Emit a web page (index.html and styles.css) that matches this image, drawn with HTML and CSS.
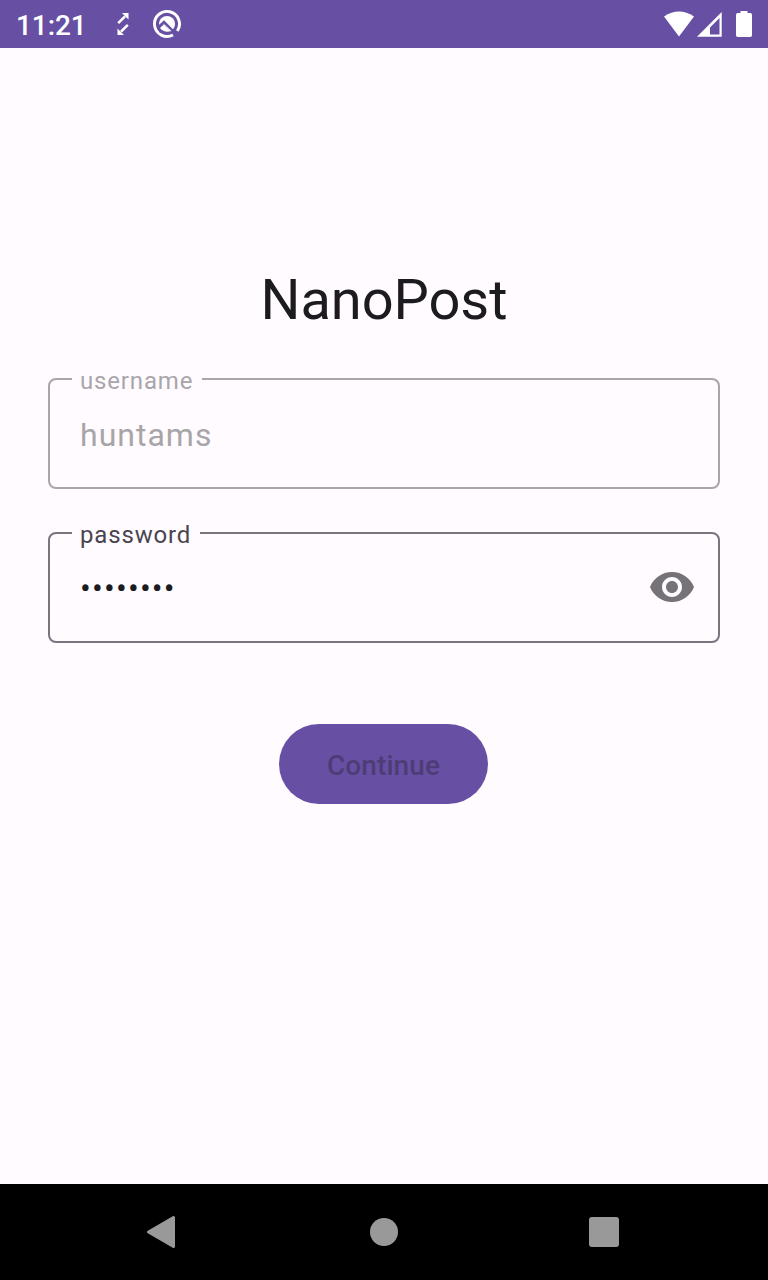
FILE: index.html
```html
<!DOCTYPE html>
<html lang="en">
<head>
<meta charset="utf-8">
<title>NanoPost</title>
<link rel="stylesheet" href="styles.css">
</head>
<body>
<div class="screen">
  <header class="status">
    <span class="clock">11:21</span>
    <svg class="sync" width="12" height="22" viewBox="0 0 12 22" fill="none" stroke="#fff" stroke-width="2.600"><path d="M1.200 10.200 8 3.400M10.800 11.800 4 18.600"/><path d="M5 0H11.500V6.500ZM.5 15.500V22H7Z" fill="#fff" stroke="none"/></svg>
    <svg class="q" width="30" height="30" viewBox="0 0 30 30" fill="none"><path d="M21 25.900A12.500 12.500 0 1 1 25.300 22" stroke="#fff" stroke-width="2.900"/><circle cx="15" cy="15" r="8" fill="#fff"/><path d="M6 18.500 12 13 23 24" stroke="#6750a4" stroke-width="2.400"/><path d="M5 18.500 12 15 20 24H8Z" fill="#6750a4"/><path d="M8 19 11.800 15.600 18.800 22.300Q12 24 8 19Z" fill="#fff"/></svg>
    <svg class="signals" width="88" height="28" viewBox="0 0 88 28" fill="#fff"><path d="M0 6.500Q15-3.500 30 6.500L15 26.500Z"/><path fill-rule="evenodd" d="M57.700 2V26.700H33ZM55.500 8V24.500H46V17.500Z"/><path d="M76.500 1h7v2h2.800q1.700 0 1.700 1.700v20.600q0 1.700-1.700 1.700H73.700q-1.700 0-1.700-1.700V4.700Q72 3 73.700 3h2.800Z"/></svg>
  </header>
  <main class="login">
    <h1 class="title">NanoPost</h1>
    <div class="field disabled">
      <span class="label">username</span>
      <span class="value">huntams</span>
    </div>
    <div class="field">
      <span class="label pass-label">password</span>
      <span class="value dots">••••••••</span>
      <svg class="eye" width="48" height="48" viewBox="0 0 24 24" fill="#757377"><path d="M12 4.500C7 4.500 2.730 7.610 1 12c1.730 4.390 6 7.500 11 7.500s9.270-3.110 11-7.500c-1.730-4.390-6-7.500-11-7.500zM12 17c-2.760 0-5-2.240-5-5s2.240-5 5-5 5 2.240 5 5-2.240 5-5 5zm0-8c-1.660 0-3 1.340-3 3s1.340 3 3 3 3-1.340 3-3-1.340-3-3-3z"/></svg>
    </div>
    <button class="continue" type="button">Continue</button>
  </main>
  <nav class="nav">
    <svg width="30" height="34" viewBox="0 0 30 34"><path d="M2.500 17 27.500 2.500V31.500Z" fill="#999" stroke="#999" stroke-width="3" stroke-linejoin="round"/></svg>
    <span class="home"></span>
    <span class="recent"></span>
  </nav>
</div>
</body>
</html>
```
FILE: styles.css
```css
* { box-sizing: border-box; }
body { margin: 0; font-family: Roboto, sans-serif; }
.screen { width: 768px; height: 1280px; display: flex; flex-direction: column; background: #fffbff; overflow: hidden; }
.status { height: 48px; flex: none; display: flex; align-items: center; padding: 0 16px; background: #6750a4; color: #fff; }
.clock { width: 101px; font-size: 28px; font-weight: 500; line-height: 32px; padding-top: 3px; letter-spacing: -0.1px; }
.q { margin-left: 23px; }
.signals { margin-left: auto; }
.login { flex: 1; display: flex; flex-direction: column; align-items: center; padding: 219px 48px 0; }
.title { margin: 0; font-size: 56px; font-weight: 400; line-height: 66px; letter-spacing: -0.05px; color: #1c1b1f; }
.field { position: relative; width: 672px; height: 111px; margin-top: 43px; border: 2px solid #79747e; border-radius: 8px; display: flex; align-items: center; justify-content: space-between; padding: 0 22px 0 30px; color: #1c1b1f; }
.title + .field { margin-top: 45px; }
.disabled { border-color: #a9a5aa; color: #a8a5a9; }
.label { position: absolute; left: 22px; top: -13px; width: 130px; height: 28px; padding-left: 8px; background: #fffbff; font-size: 24px; line-height: 28px; letter-spacing: 0.84px; color: #49454f; white-space: nowrap; }
.pass-label { width: 128px; }
.disabled .label { color: #a9a6ab; }
.value { font-size: 32px; line-height: 38px; letter-spacing: 1px; padding-top: 2px; }
.dots { letter-spacing: 1.18px; padding-top: 0; }
.eye { margin-bottom: 1px; }
.continue { margin: 81px 1px 0 0; width: 209px; height: 80px; border: 0; border-radius: 40px; padding: 3px 0 0; background: #6750a4; color: #4d3d75; font: 500 28px/33px Roboto, sans-serif; letter-spacing: 0.1px; }
.nav { flex: none; height: 96px; display: flex; align-items: center; justify-content: space-between; padding: 0 149px 0 146px; background: #000; }
.home { width: 28px; height: 28px; border-radius: 50%; background: #999; margin-left: 2px; }
.recent { width: 30px; height: 30px; border-radius: 3px; background: #999; }
```
